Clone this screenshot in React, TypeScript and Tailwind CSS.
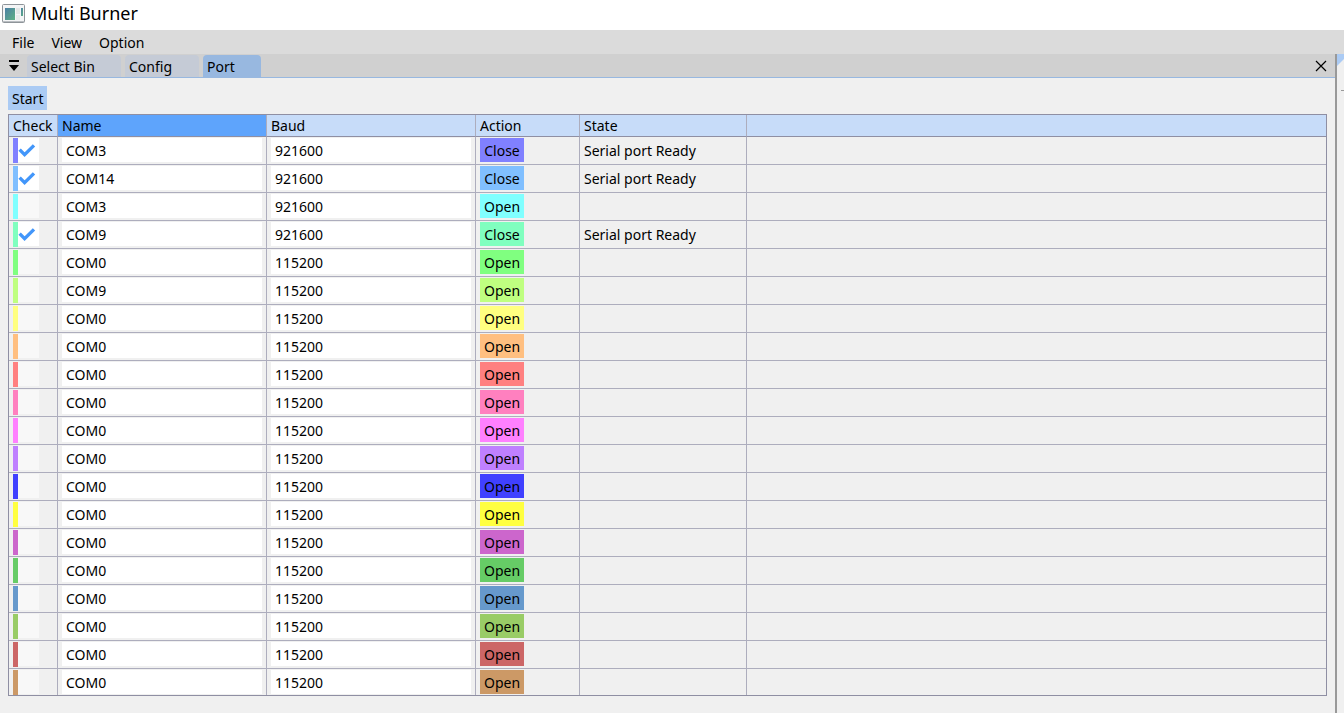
import { useState } from "react";

type Port = { name: string; baud: string; open?: boolean; checked?: boolean; color: string };

const initialPorts: Port[] = [
  { name: "COM3", baud: "921600", open: true, checked: true, color: "bg-[#8080ff]" },
  { name: "COM14", baud: "921600", open: true, checked: true, color: "bg-[#80bfff]" },
  { name: "COM3", baud: "921600", color: "bg-[#80ffff]" },
  { name: "COM9", baud: "921600", open: true, checked: true, color: "bg-[#80ffbf]" },
  { name: "COM0", baud: "115200", color: "bg-[#80ff80]" },
  { name: "COM9", baud: "115200", color: "bg-[#bfff80]" },
  { name: "COM0", baud: "115200", color: "bg-[#ffff80]" },
  { name: "COM0", baud: "115200", color: "bg-[#ffbf80]" },
  { name: "COM0", baud: "115200", color: "bg-[#ff8080]" },
  { name: "COM0", baud: "115200", color: "bg-[#ff80bf]" },
  { name: "COM0", baud: "115200", color: "bg-[#ff80ff]" },
  { name: "COM0", baud: "115200", color: "bg-[#bf80ff]" },
  { name: "COM0", baud: "115200", color: "bg-[#4040ff]" },
  { name: "COM0", baud: "115200", color: "bg-[#ffff40]" },
  { name: "COM0", baud: "115200", color: "bg-[#cc66cc]" },
  { name: "COM0", baud: "115200", color: "bg-[#66cc66]" },
  { name: "COM0", baud: "115200", color: "bg-[#6699cc]" },
  { name: "COM0", baud: "115200", color: "bg-[#99cc66]" },
  { name: "COM0", baud: "115200", color: "bg-[#cc6666]" },
  { name: "COM0", baud: "115200", color: "bg-[#cc9966]" },
];

const columns = [
  { label: "Check", width: "w-[49px]" },
  { label: "Name", width: "w-[209px]" },
  { label: "Baud", width: "w-[209px]" },
  { label: "Action", width: "w-[104px]" },
  { label: "State", width: "w-[167px]" },
];

function AppIcon() {
  return (
    <svg width="23" height="19" viewBox="0 0 23 19" aria-hidden="true">
      <defs>
        <linearGradient id="screen" x1="0" y1="0" x2="1" y2="1">
          <stop offset="0" stopColor="#4a7fa5" />
          <stop offset="1" stopColor="#5fb184" />
        </linearGradient>
      </defs>
      <rect x="0.5" y="0.5" width="22" height="18" rx="1" fill="#f4f5f6" stroke="#8e9499" />
      <rect x="1" y="17" width="21" height="1" fill="#b9bdc1" />
      <rect x="3" y="4" width="10" height="12" fill="url(#screen)" />
      <rect x="14" y="4" width="4" height="6" fill="#e3e6e6" />
      <rect x="14" y="11" width="4" height="5" fill="#e9ebeb" />
      <rect x="19" y="4" width="2" height="8" fill="url(#screen)" />
    </svg>
  );
}

function CheckBox({ checked, label, onChange }: { checked: boolean; label: string; onChange: () => void }) {
  return (
    <span className="grid h-6 w-[21px]">
      <input
        type="checkbox"
        aria-label={label}
        checked={checked}
        onChange={onChange}
        className="col-start-1 row-start-1 h-6 w-[21px] appearance-none bg-[#f8f8f8] checked:bg-white"
      />
      {checked && (
        <svg width="21" height="24" viewBox="0 0 21 24" className="pointer-events-none col-start-1 row-start-1" aria-hidden="true">
          <path d="M1.6 11.6 L6.6 16.6 L16 7.4" fill="none" stroke="#4296fa" strokeWidth="3.4" />
        </svg>
      )}
    </span>
  );
}

export default function App() {
  const [ports, setPorts] = useState(initialPorts);
  const [tab, setTab] = useState("Port");

  const update = (index: number, change: Partial<Port>) =>
    setPorts(ports.map((port, i) => (i === index ? { ...port, ...change } : port)));

  return (
    <div className="flex min-h-screen flex-col bg-[#f0f0f0] font-['Noto_Sans','Noto_Sans_CJK_SC',sans-serif] text-sm leading-5 text-black">
      <header className="flex h-[30px] items-center gap-[6px] bg-white px-[2px] pb-1">
        <AppIcon />
        <h1 className="text-lg leading-6">Multi Burner</h1>
      </header>

      <nav className="flex h-6 items-center gap-[17px] bg-[#dbdbdb] px-3 pt-[2px]">
        {["File", "View", "Option"].map((item) => (
          <button key={item}>{item}</button>
        ))}
      </nav>

      <div className="flex flex-1">
        <main className="flex min-w-0 flex-1 flex-col">
          <div className="flex h-6 items-end border-b border-[#98b8e0] bg-[#d0d0d0] pl-2">
            <button aria-label="Tab list" className="mr-[7px] flex h-[22px] w-3 items-center justify-center">
              <svg width="12" height="12" viewBox="0 0 12 12" aria-hidden="true">
                <path d="M1 0H11V2H1Z M1 5H11L6 11Z" fill="#000" />
              </svg>
            </button>
            <div className="flex gap-1">
              {[
                { label: "Select Bin", width: "w-[94px]" },
                { label: "Config", width: "w-[74px]" },
                { label: "Port", width: "w-[58px]" },
              ].map(({ label, width }) => (
                <button
                  key={label}
                  onClick={() => setTab(label)}
                  className={`h-[22px] rounded-t px-1 pt-[2px] text-left ${width} ${tab === label ? "bg-[#98b8e0]" : "bg-[#c5cbd6]"}`}
                >
                  {label}
                </button>
              ))}
            </div>
            <button aria-label="Close tab" className="mr-2 ml-auto flex h-[22px] w-3 items-center justify-center">
              <svg width="12" height="12" viewBox="0 0 12 12" aria-hidden="true">
                <path d="M1 1L11 11M11 1L1 11" fill="none" stroke="#000" strokeWidth="1.2" />
              </svg>
            </button>
          </div>

          <div className="flex flex-col items-start gap-1 p-2">
            <button className="h-6 bg-[#abcbf4] px-1 pt-[2px]">Start</button>

            <table className="w-full table-fixed border-separate border-spacing-0 border border-[#8f8fa3]">
              <thead>
                <tr className="h-[22px] bg-[#c7dcf9] text-left">
                  {columns.map(({ label, width }) => (
                    <th
                      key={label}
                      className={`border-r border-b border-r-[#adadbd] border-b-[#8f8fa3] p-0 pl-1 font-normal ${width} ${label === "Name" ? "bg-[#5ea4fc]" : ""}`}
                    >
                      <span className="block pt-px">{label}</span>
                    </th>
                  ))}
                  <th aria-label="Empty" className="border-b border-[#8f8fa3] p-0" />
                </tr>
              </thead>
              <tbody className="[&>tr:last-child>td]:border-b-0 [&>tr:last-child>td]:pb-0 [&_td]:border-[#adadbd]">
                {ports.map((port, i) => (
                  <tr key={i} className="align-top">
                    <td className="border-r border-b p-0 pt-px pb-px pl-1">
                      <div className="flex items-start">
                        <span className={`h-[25px] w-[5px] ${port.color}`} />
                        <CheckBox
                          label={`Check port ${i + 1}`}
                          checked={!!port.checked}
                          onChange={() => update(i, { checked: !port.checked })}
                        />
                      </div>
                    </td>
                    <td className="border-r border-b p-0 px-1 pt-px">
                      <input
                        aria-label={`Name of port ${i + 1}`}
                        value={port.name}
                        onChange={(e) => update(i, { name: e.target.value })}
                        className="block h-6 w-full bg-white px-1"
                      />
                    </td>
                    <td className="border-r border-b p-0 px-1 pt-px">
                      <input
                        aria-label={`Baud of port ${i + 1}`}
                        value={port.baud}
                        onChange={(e) => update(i, { baud: e.target.value })}
                        className="block h-6 w-full bg-white px-1"
                      />
                    </td>
                    <td className="border-r border-b p-0 pt-px pl-1">
                      <button
                        onClick={() => update(i, { open: !port.open })}
                        className={`block h-6 w-11 pt-[2px] text-center ${port.color}`}
                      >
                        {port.open ? "Close" : "Open"}
                      </button>
                    </td>
                    <td className="border-r border-b p-0 pt-1 pl-1">{port.open ? "Serial port Ready" : ""}</td>
                    <td className="border-b p-0" />
                  </tr>
                ))}
              </tbody>
            </table>
          </div>
        </main>

        <aside className="flex w-[9px] flex-col items-end border-l-2 border-[#999999]">
          <svg width="7" height="12" viewBox="0 0 7 12" aria-hidden="true">
            <path d="M0 0H7V5L0 12Z" fill="#abcbf4" />
          </svg>
          <span className="mt-6 h-px w-[3px] bg-[#999999]" />
        </aside>
      </div>
    </div>
  );
}
